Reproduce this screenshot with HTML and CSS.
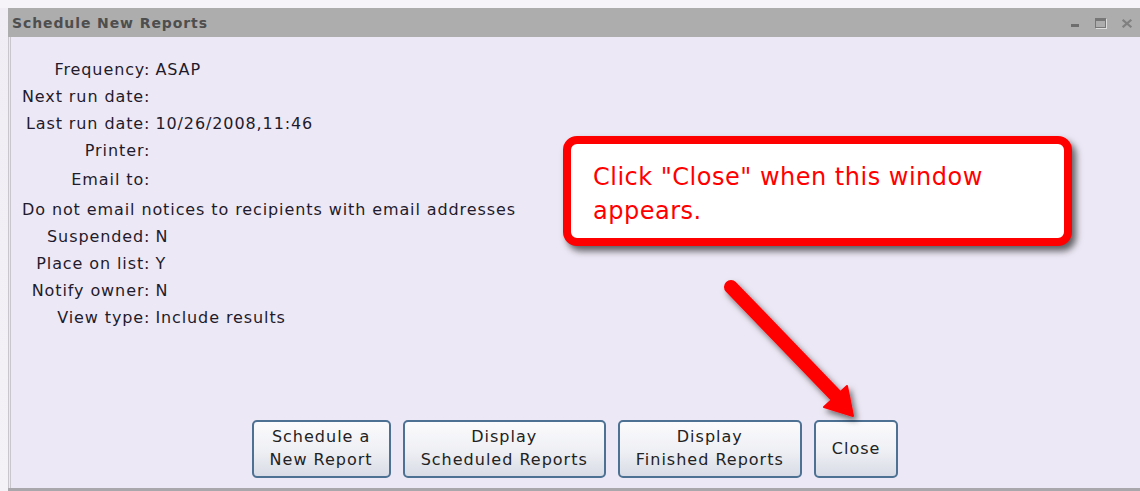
FILE: index.html
```html
<!DOCTYPE html>
<html>
<head>
<meta charset="utf-8">
<title>Schedule New Reports</title>
<link rel="stylesheet" href="styles.css">
</head>
<body>
<div class="desk">
  <div class="desk-edge"></div>
  <div class="window">
    <div class="titlebar">
      <span class="title">Schedule New Reports</span>
      <div class="controls">
        <span class="ctl ctl-min"></span>
        <span class="ctl ctl-max"></span>
        <svg class="ctl ctl-close" width="10" height="9" viewBox="0 0 10 9">
          <path d="M1.5 1.5 L8.5 7.5 M8.5 1.5 L1.5 7.5" stroke="#808080" stroke-width="2.2" stroke-linecap="square"/>
        </svg>
      </div>
    </div>
    <div class="body">
      <div class="details">
        <span class="lbl">Frequency:</span><span class="val">ASAP</span>
        <span class="lbl">Next run date:</span><span class="val"></span>
        <span class="lbl">Last run date:</span><span class="val">10/26/2008,11:46</span>
        <span class="lbl">Printer:</span><span class="val"></span>
        <span class="lbl">Email to:</span><span class="val"></span>
        <span class="full">Do not email notices to recipients with email addresses</span>
        <span class="lbl">Suspended:</span><span class="val">N</span>
        <span class="lbl">Place on list:</span><span class="val">Y</span>
        <span class="lbl">Notify owner:</span><span class="val">N</span>
        <span class="lbl">View type:</span><span class="val">Include results</span>
      </div>
      <div class="actions">
        <button class="btn">Schedule a<br>New Report</button>
        <button class="btn">Display<br>Scheduled Reports</button>
        <button class="btn">Display<br>Finished Reports</button>
        <button class="btn btn-close">Close</button>
      </div>
    </div>
  </div>

  <div class="callout">
    <p>Click "Close" when this window appears.</p>
  </div>

  <svg class="pointer" width="1140" height="491" viewBox="0 0 1140 491">
    <defs>
      <filter id="drop" x="-20%" y="-20%" width="140%" height="140%">
        <feGaussianBlur in="SourceAlpha" stdDeviation="3"/>
        <feOffset dx="3" dy="4" result="b"/>
        <feFlood flood-color="#000" flood-opacity="0.55"/>
        <feComposite in2="b" operator="in"/>
        <feMerge><feMergeNode/><feMergeNode in="SourceGraphic"/></feMerge>
      </filter>
    </defs>
    <g filter="url(#drop)" fill="#ff0000" stroke="#ff0000">
      <line x1="731" y1="287" x2="838" y2="398" stroke-width="14" stroke-linecap="round"/>
      <polygon points="824,407 853,416 847,386" stroke-width="2" stroke-linejoin="round"/>
    </g>
  </svg>
</div>
</body>
</html>
```

FILE: styles.css
```css
* { box-sizing: border-box; }

html, body {
  margin: 0;
  padding: 0;
  width: 1140px;
  height: 491px;
  overflow: hidden;
  background: #f6f4f9;
}

.desk {
  position: relative;
  width: 1140px;
  height: 491px;
  display: flex;
  padding-top: 8px;
  font-family: "DejaVu Sans", Verdana, sans-serif;
}

.desk-edge {
  width: 8px;
  background: linear-gradient(#f0eef4, #f4f2f7);
}

.window {
  flex: 1;
  display: flex;
  flex-direction: column;
  border-bottom: 3px solid #a9a7ab;
}

.titlebar {
  height: 29px;
  background: #adadad;
  display: flex;
  align-items: center;
  justify-content: space-between;
  padding: 0 6px 0 4px;
}

.title {
  font-weight: bold;
  font-size: 14px;
  color: #4e4e4e;
  letter-spacing: 0.9px;
}

.controls {
  display: flex;
  align-items: center;
  gap: 16px;
  padding-right: 2px;
}

.ctl {
  display: inline-block;
}

.ctl-min {
  width: 8px;
  height: 3px;
  background: #6e6e6e;
  margin-top: 5px;
}

.ctl-max {
  width: 11px;
  height: 10px;
  border: 1px solid #777;
  border-top-width: 3px;
  box-shadow: 1px 1px 0 #ddd;
}

.ctl-close {
  margin-top: 1px;
}

.body {
  flex: 1;
  background: #ede8f5;
  border-left: 3px double #c9c6cd;
  display: flex;
  flex-direction: column;
  justify-content: space-between;
  padding: 19px 0 10px 11px;
}

.details {
  display: grid;
  grid-template-columns: max-content 1fr;
  grid-template-rows: 27px 27px 27px 27px 31px 28px 27px 27px 27px 27px;
  column-gap: 5px;
  align-items: center;
  font-size: 16px;
  letter-spacing: 0.9px;
  color: #1f1b2c;
}

.lbl { text-align: right; }

.full {
  grid-column: 1 / -1;
}

.actions {
  display: flex;
  justify-content: center;
  gap: 12px;
  padding-right: 12px;
}

.btn {
  height: 58px;
  padding: 0 16px 3px;
  border: 2px solid #4d7193;
  border-radius: 5px;
  background: linear-gradient(#fbfbfd 0%, #eeeff4 55%, #d9dce6 100%);
  font-family: "DejaVu Sans", Verdana, sans-serif;
  font-size: 16px;
  letter-spacing: 1px;
  line-height: 23px;
  color: #222;
  text-align: center;
}

.btn-close { padding-bottom: 1px; }

.callout {
  position: absolute;
  left: 563px;
  top: 136px;
  width: 509px;
  height: 110px;
  background: #fff;
  border: 8px solid #ff0000;
  border-radius: 14px;
  box-shadow: 4px 5px 7px rgba(0, 0, 0, 0.6);
  padding: 16px 20px 0 22px;
}

.callout p {
  margin: 0;
  color: #ff0000;
  font-size: 24px;
  letter-spacing: 0.5px;
  line-height: 34px;
  width: 440px;
}

.pointer {
  position: absolute;
  left: 0;
  top: 0;
  pointer-events: none;
}
```
